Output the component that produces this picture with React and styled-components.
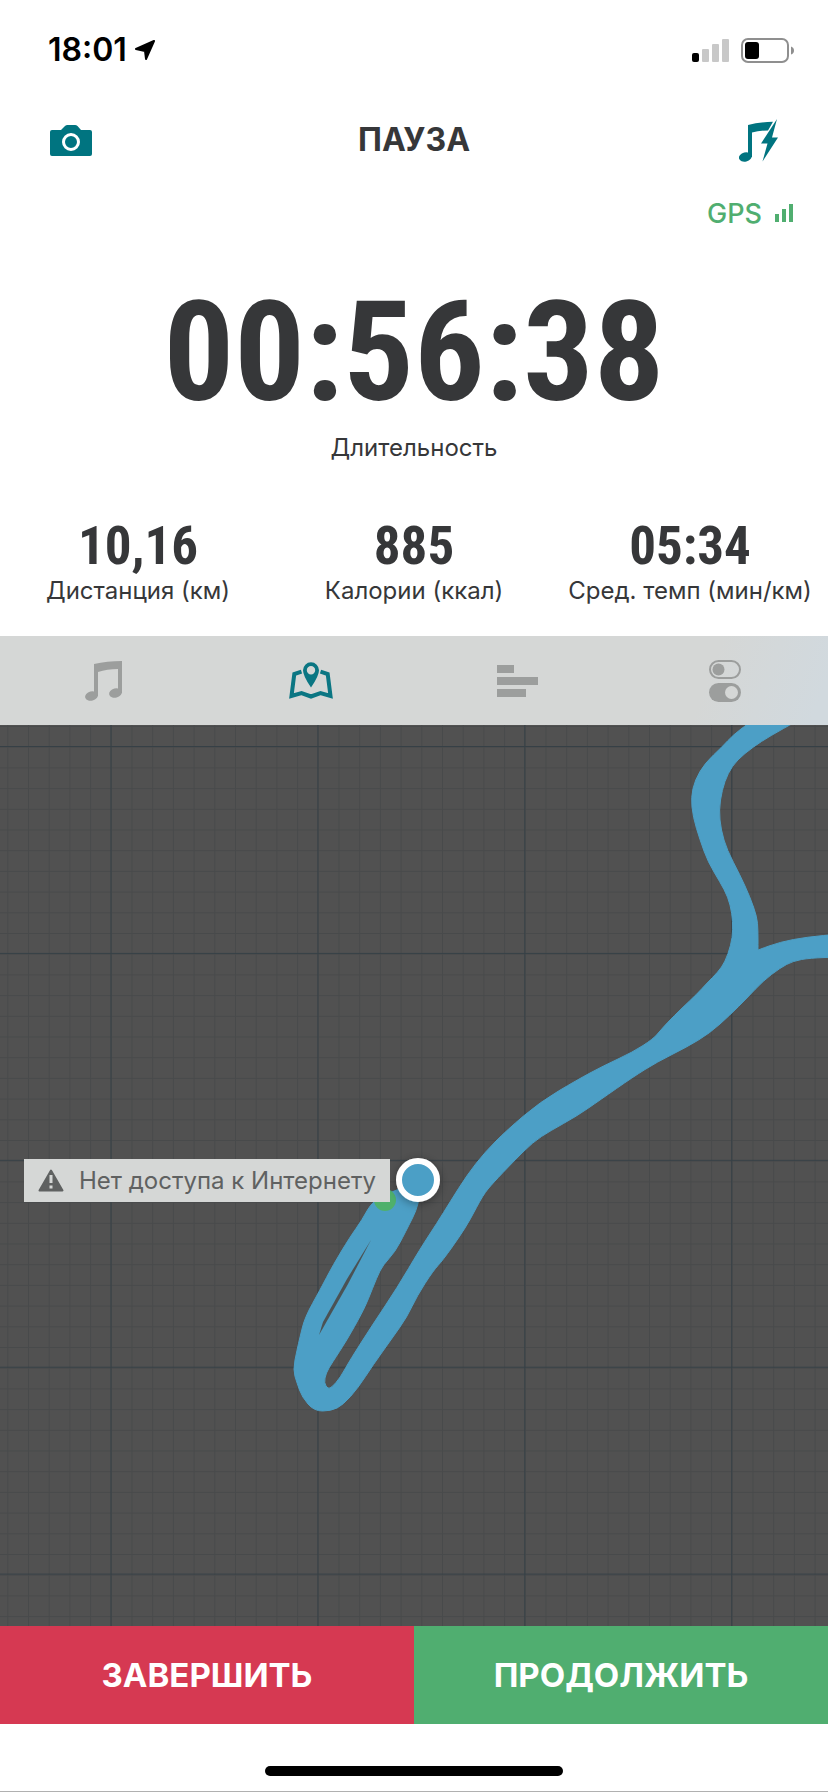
import React from 'react'
import styled, { createGlobalStyle } from 'styled-components';

const GlobalStyle = createGlobalStyle`
  * {
    box-sizing: border-box;
  }
  body {
    margin: 0;
    background: #ffffff;
    color: #363739;
    font-family: Inter, "Liberation Sans", sans-serif;
  }
  button {
    margin: 0;
    padding: 0;
    border: none;
    background: none;
    font-family: inherit;
    cursor: pointer;
  }
  svg {
    display: block;
  }
`

const Screen = styled.div`
  display: flex;
  flex-direction: column;
  min-height: 100vh;
  border-bottom: 1px solid #b0b0b0;
`

/* top of the screen */

const StatusBar = styled.div`
  display: flex;
  align-items: center;
  justify-content: space-between;
  height: 100px;
  padding: 0 34px 0 48px;
  color: #000000;
`

const StatusGroup = styled.div`
  display: flex;
  align-items: center;
  gap: ${props => props.gap};
`

const Clock = styled.span`
  font-size: 32px;
  font-weight: 600;
  line-height: 40px;
`

const Header = styled.header`
  display: grid;
  grid-template-columns: 1fr auto 1fr;
  align-items: center;
  height: 80px;
  padding: 0 50px;
`

const Title = styled.h1`
  margin: 0;
  font-size: 32px;
  font-weight: 700;
  line-height: 40px;
`

const IconButton = styled.button`
  color: #007480;
  justify-self: ${props => props.side};
`

const Gps = styled.div`
  display: flex;
  align-items: center;
  justify-content: flex-end;
  gap: 13px;
  height: 66px;
  padding-right: 35px;
  color: #50ae70;
  font-size: 27px;
  font-weight: 500;
`

/* numbers */

const Metric = styled.div`
  display: flex;
  flex-direction: column;
  align-items: center;
  text-align: center;
`

const Label = styled.span`
  font-size: 24px;
  line-height: 32px;
  white-space: nowrap;
`

const Value = styled.strong`
  font-family: "Roboto Condensed", "Liberation Sans Narrow", Roboto, sans-serif;
  font-weight: 700;
  font-size: 53px;
  line-height: 57px;
`

const BigValue = styled(Value)`
  font-size: 140px;
  line-height: 120px;
  margin: 46px 0 20px;
`

const Stats = styled.div`
  display: grid;
  grid-template-columns: repeat(3, 1fr);
  padding: 54px 0 29px;
`

/* tabs */

const Tabs = styled.nav`
  display: grid;
  grid-template-columns: repeat(4, 1fr);
  height: 89px;
  background: linear-gradient(110deg, #d5d7d6 84%, #d1d9de 98%);
`

const Tab = styled.button`
  display: flex;
  align-items: center;
  justify-content: center;
  color: ${props => props.$active ? "#0b7683" : "#9c9e9d"};
`

/* map */

const MapArea = styled.main`
  position: relative;
  display: flex;
  flex: 1;
  min-height: 400px;
  overflow: hidden;
  background: #515151;
`

const MapDrawing = styled.svg`
  flex: 1;
  width: 100%;
`

const Notice = styled.div`
  position: absolute;
  left: 24px;
  top: 434px;
  display: flex;
  align-items: center;
  gap: 15px;
  height: 43px;
  padding: 0 14px;
  background: #d5d7d6;
  color: #5f6161;
  font-size: 24px;
  white-space: nowrap;
`

/* bottom of the screen */

const Actions = styled.div`
  display: grid;
  grid-template-columns: 1fr 1fr;
`

const ActionButton = styled.button`
  height: 98px;
  background: ${props => props.$color};
  color: #ffffff;
  font-size: 33px;
  font-weight: 700;
`

const HomeArea = styled.div`
  display: flex;
  justify-content: center;
  align-items: flex-end;
  height: 67px;
  padding-bottom: 15px;
`

const HomeBar = styled.div`
  width: 36%;
  height: 10px;
  border-radius: 5px;
  background: #000000;
`

const LocationArrow = () => (
  <svg width="20" height="21" viewBox="0 0 20 21">
    <path d="M19 1 L1 9 L10 11 L11 19 Z" fill="#000" stroke="#000" strokeWidth="2" strokeLinejoin="round" />
  </svg>
)

const Signal = () => (
  <svg width="37" height="23" viewBox="0 0 37 23">
    <rect x="0" y="14" width="7" height="9" rx="2" fill="#000" />
    <rect x="10" y="10" width="7" height="13" rx="1" fill="#c8c8c8" />
    <rect x="20" y="5" width="7" height="18" rx="1" fill="#c8c8c8" />
    <rect x="30" y="0" width="7" height="23" rx="1" fill="#c8c8c8" />
  </svg>
)

const Battery = () => (
  <svg width="53" height="25" viewBox="0 0 53 25">
    <rect x="1" y="1" width="46" height="23" rx="6" fill="none" stroke="#8f8f8f" strokeWidth="2" />
    <rect x="4" y="4" width="14" height="17" rx="3" fill="#000" />
    <path d="M50 8.500 Q53 9.500 53 12.500 Q53 15.500 50 16.500 Z" fill="#8f8f8f" />
  </svg>
)

const CameraIcon = () => (
  <svg width="42" height="31" viewBox="0 0 42 31">
    <path d="M2 5 H11 L15 1 Q16 0 17.500 0 H25 Q26.500 0 27.500 1 L31 5 H40 Q42 5 42 7 V29 Q42 31 40 31 H2 Q0 31 0 29 V7 Q0 5 2 5 Z" fill="currentColor" />
    <circle cx="21" cy="17" r="7.500" fill="none" stroke="#fff" strokeWidth="3" />
  </svg>
)

const MusicBoltIcon = () => (
  <svg width="39" height="43" viewBox="0 0 39 43" fill="currentColor">
    <ellipse cx="6.300" cy="38" rx="6.500" ry="4.600" transform="rotate(-14 6.300 38)" />
    <path d="M9 6 Q20 3 34 2.700 L29 11.500 Q20 11.500 13 13.500 V38 H9 Z" />
    <path d="M38 0 L22 24.500 H28.500 L23.500 42.500 L39 18.500 H33 Z" />
  </svg>
)

const GpsBars = () => (
  <svg width="18" height="18" viewBox="0 0 18 18" fill="currentColor">
    <rect x="0" y="10" width="4" height="8" />
    <rect x="7" y="5" width="4" height="13" />
    <rect x="14" y="0" width="4" height="18" />
  </svg>
)

const MusicIcon = () => (
  <svg width="38" height="40" viewBox="0 0 38 40" fill="currentColor">
    <ellipse cx="6.500" cy="35" rx="6.500" ry="4.700" transform="rotate(-14 6.500 35)" />
    <ellipse cx="30.500" cy="32" rx="6.500" ry="4.700" transform="rotate(-14 30.500 32)" />
    <path d="M9 3 Q22 0 37 0 V32 H33 V8 Q22 8 13 11 V35 H9 Z" />
  </svg>
)

const MapIcon = () => (
  <svg width="44" height="37" viewBox="0 0 44 37">
    <path d="M12.500 9.700 L5.300 12 L2.500 34 L12.500 31 L22 34.500 L31.500 31 L41.500 34 L38.700 12 L31.500 9.700" fill="none" stroke="currentColor" strokeWidth="4" />
    <path fillRule="evenodd" fill="currentColor" d="M22 25.500 Q14 14 14 8.300 A8 8 0 0 1 30 8.300 Q30 14 22 25.500 Z M22 4 A4.200 4.200 0 1 0 22 12.400 A4.200 4.200 0 1 0 22 4 Z" />
  </svg>
)

const ChartIcon = () => (
  <svg width="41" height="32" viewBox="0 0 41 32" fill="currentColor">
    <rect x="0" y="0" width="17" height="8" />
    <rect x="0" y="12" width="41" height="8" />
    <rect x="0" y="24" width="29" height="8" />
  </svg>
)

const SwitchesIcon = () => (
  <svg width="32" height="42" viewBox="0 0 32 42" fill="currentColor">
    <rect x="1" y="1" width="30" height="17" rx="8.500" fill="none" stroke="currentColor" strokeWidth="2" />
    <circle cx="9.500" cy="9.500" r="6" />
    <rect x="0" y="23" width="32" height="19" rx="9.500" />
    <circle cx="22.500" cy="32.500" r="6.500" fill="#d5d7d6" />
  </svg>
)

const WarningIcon = () => (
  <svg width="26" height="23" viewBox="0 0 26 23">
    <path d="M13 1.500 L24.500 21.500 H1.500 Z" fill="currentColor" stroke="currentColor" strokeWidth="2" strokeLinejoin="round" />
    <path d="M13 6 V14 M13 16.500 V19.500" stroke="#d5d7d6" strokeWidth="3" />
  </svg>
)

// outline of the run, both directions merged into one shape
// a point given twice stays a sharp corner
const route = `
  749,-2 749,-2 733,10 722,22 705,38 695,55 691,72 693,92 700,115 708,137 720,157 728,172 732,188
  733,205 731,220 725,237 718,247 707,258 697,269 682,283 667,298 660,306 653,314 633,327 603,341
  577,355 540,377 507,405 485,427 467,450 450,477 437,498 420,524 397,563 373,599 350,635 340,653
  332,662 328,664 324,658 326,648 332,638 347,615 362,588 368,575 377,552 383,540 395,527 405,508
  420,478 418,455 397,465 373,475 362,495 350,512 333,540 320,565 305,592 300,612 297,625 293,645
  297,658 302,672 314,686 331,686 343,680 358,663 373,640 393,612 407,592 417,571 433,546 443,535
  460,511 470,495 483,470 493,458 513,437 533,417 550,406 577,391 600,375 633,352 657,337 687,322
  710,308 730,290 747,273 763,256 780,243 793,236 810,233 840,232 840,232 840,209 840,209 807,212
  780,217 758,225 758,225 758,205 757,192 750,172 740,150 727,125 721,105 719,85 722,65 728,48
  737,35 753,22 770,11 797,-4 797,-4
`

const toSmoothPath = text => {
  const points = text.trim().split(/\s+/).map(pair => pair.split(',').map(Number))
  const middle = (a, b) => [(a[0] + b[0]) / 2, (a[1] + b[1]) / 2]
  const start = middle(points[points.length - 1], points[0])
  const curves = points.map((point, i) => {
    const next = points[(i + 1) % points.length]
    return `Q${point} ${middle(point, next)}`
  })
  return `M${start} ${curves.join(' ')} Z`
}

const RunMap = () => (
  <MapDrawing viewBox="0 0 828 901" preserveAspectRatio="xMidYMin slice" role="img" aria-label="Карта">
    <defs>
      <pattern id="minor" x="7.300" y="1" width="20.700" height="20.700" patternUnits="userSpaceOnUse">
        <path d="M0.500 0 V20.700 M0 0.500 H20.700" stroke="#484a4b" strokeWidth="1" />
      </pattern>
      <pattern id="major" x="110.500" y="21" width="206.900" height="206.900" patternUnits="userSpaceOnUse">
        <path d="M0.500 0 V206.900 M0 0.500 H206.900" stroke="#364046" strokeWidth="1" />
      </pattern>
      <filter id="shadow" x="-50%" y="-50%" width="200%" height="200%">
        <feDropShadow dx="0" dy="2" stdDeviation="5" floodOpacity="0.350" />
      </filter>
    </defs>
    <rect width="828" height="901" fill="url(#minor)" />
    <rect width="828" height="901" fill="url(#major)" />
    <path d={toSmoothPath(route)} fill="#4c9fc6" stroke="#4c9fc6" strokeWidth="1" strokeLinejoin="round" />
    <path d="M371 515 L347 554 L323 597 L319 610 L348 559 Z" fill="#4b5254" />
    <circle cx="385" cy="475" r="11" fill="#4fb06c" />
    <circle cx="418" cy="455" r="19" fill="#4c9fc6" stroke="#fff" strokeWidth="6" filter="url(#shadow)" />
  </MapDrawing>
)

const stats = [
  { value: '10,16', label: 'Дистанция (км)' },
  { value: '885', label: 'Калории (ккал)' },
  { value: '05:34', label: 'Сред. темп (мин/км)' },
]

function App() {
  return (
    <Screen>
      <GlobalStyle />

      <StatusBar>
        <StatusGroup gap="8px">
          <Clock>18:01</Clock>
          <LocationArrow />
        </StatusGroup>
        <StatusGroup gap="12px">
          <Signal />
          <Battery />
        </StatusGroup>
      </StatusBar>

      <Header>
        <IconButton side="start" aria-label="Камера"><CameraIcon /></IconButton>
        <Title>ПАУЗА</Title>
        <IconButton side="end" aria-label="Музыка"><MusicBoltIcon /></IconButton>
      </Header>

      <Gps>
        <span>GPS</span>
        <GpsBars />
      </Gps>

      <Metric>
        <BigValue>00:56:38</BigValue>
        <Label>Длительность</Label>
      </Metric>

      <Stats>
        {stats.map(item => (
          <Metric key={item.label}>
            <Value>{item.value}</Value>
            <Label>{item.label}</Label>
          </Metric>
        ))}
      </Stats>

      <Tabs>
        <Tab aria-label="Музыка"><MusicIcon /></Tab>
        <Tab $active aria-label="Карта"><MapIcon /></Tab>
        <Tab aria-label="Статистика"><ChartIcon /></Tab>
        <Tab aria-label="Настройки"><SwitchesIcon /></Tab>
      </Tabs>

      <MapArea>
        <RunMap />
        <Notice>
          <WarningIcon />
          <span>Нет доступа к Интернету</span>
        </Notice>
      </MapArea>

      <Actions>
        <ActionButton $color="#d63952">ЗАВЕРШИТЬ</ActionButton>
        <ActionButton $color="#50ae70">ПРОДОЛЖИТЬ</ActionButton>
      </Actions>

      <HomeArea>
        <HomeBar />
      </HomeArea>
    </Screen>
  )
}

export default App
